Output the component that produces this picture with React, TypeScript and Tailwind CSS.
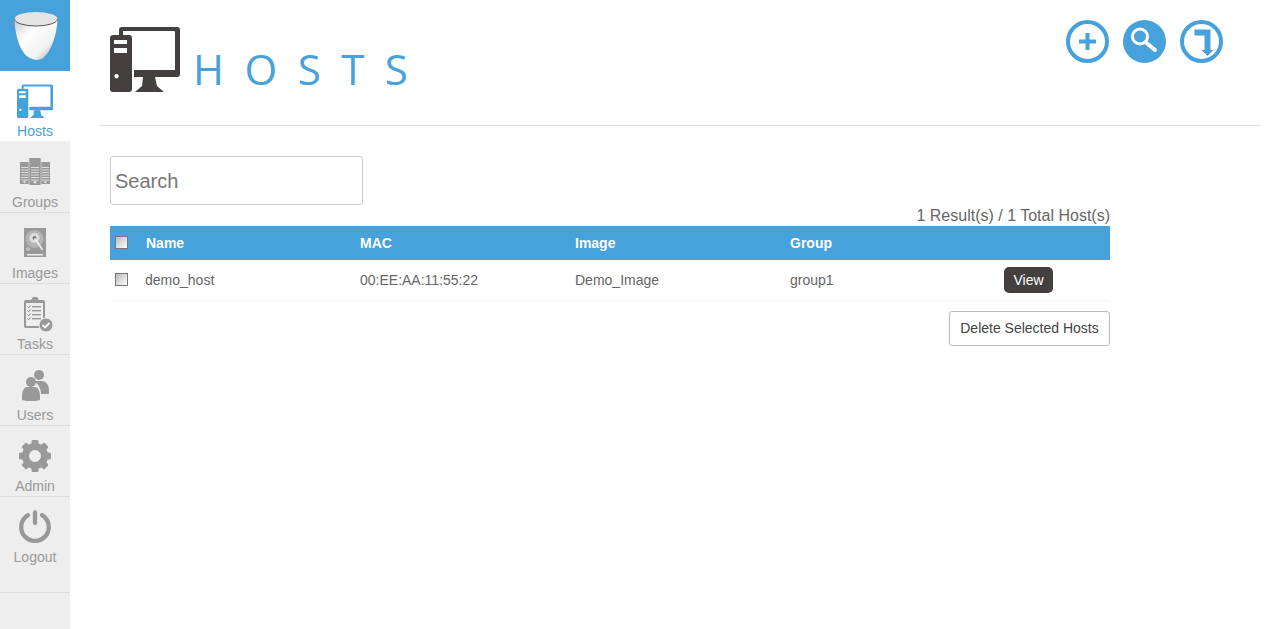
import type { ReactNode } from 'react';

const hosts = [{ name: 'demo_host', mac: '00:EE:AA:11:55:22', image: 'Demo_Image', group: 'group1' }];

function HostIcon({ className }: { className?: string }) {
  return (
    <svg viewBox="0 0 70 66" className={className} fill="currentColor">
      <path
        fillRule="evenodd"
        d="M12 1h55a3 3 0 0 1 3 3v44a3 3 0 0 1-3 3H24V44h41V6a1 1 0 0 0-1-1H13v4H9V4a3 3 0 0 1 3-3Z"
      />
      <path d="M33 51h12l2 9 7 6H25l7-6Z" />
      <path
        fillRule="evenodd"
        d="M3 9h16a3 3 0 0 1 3 3v51a3 3 0 0 1-3 3H3a3 3 0 0 1-3-3V12a3 3 0 0 1 3-3Zm1 5v4h13v-4Zm0 8v5h13v-5Zm2.500 26a2.200 2.200 0 1 0 .01 0Z"
      />
    </svg>
  );
}

function GroupsIcon() {
  const lines = (x: number, w: number) =>
    [11, 13.500, 16, 18.500, 21, 23.500].map((y) => <rect key={y} x={x} y={y + 2} width={w} height="1" fill="#ddd" />);
  return (
    <svg viewBox="0 0 36 36" className="size-9" fill="#999">
      <rect x="3" y="8" width="9" height="22" />
      <rect x="24" y="8" width="9" height="22" />
      <rect x="12" y="4" width="12" height="27" rx="1" />
      <path d="M12 4v27M24 4v27" stroke="#ddd" strokeWidth="0.700" />
      {lines(4, 7)}
      {lines(25, 7)}
      {lines(14, 8)}
      <circle cx="18" cy="28" r="1.500" fill="#ddd" />
      <circle cx="7.500" cy="28" r="1.200" fill="#ddd" />
      <circle cx="28.500" cy="28" r="1.200" fill="#ddd" />
    </svg>
  );
}

function ImagesIcon() {
  return (
    <svg viewBox="0 0 36 36" className="size-9">
      <rect x="7" y="3" width="22" height="29" fill="#999" />
      <rect x="10" y="29" width="16" height="1.500" fill="#eee" />
      <circle cx="17.500" cy="14" r="9" fill="#b5b5b5" />
      <circle cx="17.500" cy="13" r="5" fill="#dcdcdc" />
      <circle cx="17.500" cy="13" r="2" fill="#777" />
      <path d="M18 14l7 10" stroke="#eee" strokeWidth="1.800" strokeLinecap="round" />
      <circle cx="11" cy="24" r="1.300" fill="none" stroke="#eee" strokeWidth="0.700" />
    </svg>
  );
}

function TasksIcon() {
  return (
    <svg viewBox="0 0 36 36" className="size-9">
      <path d="M9 4h5l2-3h4l2 3h4a2 2 0 0 1 2 2v24a2 2 0 0 1-2 2H9a2 2 0 0 1-2-2V6a2 2 0 0 1 2-2Z" fill="#999" />
      <rect x="9" y="7" width="17" height="23" fill="#eee" />
      {[10, 14, 18, 22].map((y) => (
        <g key={y}>
          <path d={`M10.500 ${y + 0.500}l1.200 1.200 2-2.200`} fill="none" stroke="#777" strokeWidth="0.900" />
          <rect x="15" y={y} width="9" height="1.400" fill="#999" />
        </g>
      ))}
      <circle cx="29" cy="29" r="7" fill="#999" stroke="#eee" strokeWidth="1" />
      <path d="M25.500 29l2.500 2.500 4.500-4.500" fill="none" stroke="#fff" strokeWidth="1.800" />
    </svg>
  );
}

function UsersIcon() {
  return (
    <svg viewBox="0 0 36 36" className="size-9" fill="#999">
      <circle cx="22" cy="8" r="5" />
      <path d="M19 14h6c4 0 7 4 7 9v4h-8c0-5-2-9-5-11Z" />
      <circle cx="14" cy="15" r="5" />
      <path d="M10 20h8c3 0 5 4 5 9v4c-3 1-6 1-9 1s-6 0-9-1v-4c0-5 2-9 5-9Z" />
    </svg>
  );
}

function AdminIcon() {
  return (
    <svg viewBox="0 0 36 36" className="size-9" fill="#999">
      {[0, 45, 90, 135, 180, 225, 270, 315].map((a) => (
        <rect key={a} x="14.500" y="2" width="7" height="8" rx="1.500" transform={`rotate(${a} 18 18)`} />
      ))}
      <circle cx="18" cy="18" r="9.500" fill="none" stroke="#999" strokeWidth="7" />
    </svg>
  );
}

function LogoutIcon() {
  return (
    <svg viewBox="0 0 36 36" className="size-9" fill="none" stroke="#999" strokeLinecap="round" strokeWidth="4.300">
      <path d="M11 6.200a13.800 13.800 0 1 0 14 0" />
      <path d="M18 3.500v10.500" />
    </svg>
  );
}

function NavItem({ icon, label, active, className }: { icon: ReactNode; label: string; active?: boolean; className?: string }) {
  return (
    <div
      className={`flex flex-col items-center ${active ? 'bg-white text-[#47a1db]' : 'border-b border-[#ddd] text-[#999]'} ${className ?? 'h-[71px] pt-3'}`}
    >
      <div className="h-[38px]">{icon}</div>
      <span className="text-sm leading-5">{label}</span>
    </div>
  );
}

function Sidebar() {
  return (
    <div className="w-[70px] min-h-[629px] shrink-0 bg-[#eee]">
      <div className="flex h-[71px] items-center justify-center bg-[#47a1db]">
        <svg viewBox="0 0 44 50" className="ml-px h-[50px] w-[44px]">
          <defs>
            <linearGradient id="cup" x1="0" y1="0" x2="1" y2="1">
              <stop offset="0" stopColor="#c9c9c9" />
              <stop offset="0.350" stopColor="#fff" />
              <stop offset="0.700" stopColor="#f2f2f2" />
              <stop offset="1" stopColor="#9c9c9c" />
            </linearGradient>
          </defs>
          <path d="M0.500 8C1 26 7 43 16 47c5 2.500 9 2.500 13 0C37 41 43 24 43.500 8Z" fill="url(#cup)" />
          <ellipse cx="22" cy="8" rx="21.500" ry="7" fill="#e4e4e4" />
          <path d="M0.500 8a21.500 7 0 0 0 43 0" fill="none" stroke="#555" strokeWidth="1" />
        </svg>
      </div>
      <NavItem active label="Hosts" icon={<HostIcon className="mt-px h-[34px] w-9" />} className="h-[70px] pt-3" />
      <NavItem label="Groups" icon={<GroupsIcon />} className="h-[72px] pt-[13px]" />
      <NavItem label="Images" icon={<ImagesIcon />} />
      <NavItem label="Tasks" icon={<TasksIcon />} />
      <NavItem label="Users" icon={<UsersIcon />} />
      <NavItem label="Admin" icon={<AdminIcon />} />
      <NavItem label="Logout" icon={<LogoutIcon />} className="h-[96px] pt-3" />
    </div>
  );
}

function TopActions() {
  return (
    <div className="flex gap-3 pt-[19px] pr-[36px]">
      <svg viewBox="0 0 45 45" className="size-[45px]" fill="none" stroke="#47a1db">
        <circle cx="22.500" cy="22.500" r="19.500" strokeWidth="4" />
        <path d="M14 22.500h17M22.500 14v17" strokeWidth="4" />
      </svg>
      <svg viewBox="0 0 45 45" className="size-[45px]" fill="none">
        <circle cx="22.500" cy="22.500" r="21.500" fill="#47a1db" />
        <circle cx="18" cy="17.500" r="7.500" stroke="#fff" strokeWidth="3" />
        <path d="M24 23.500l9 7.500" stroke="#fff" strokeWidth="4" strokeLinecap="round" />
      </svg>
      <svg viewBox="0 0 45 45" className="size-[45px]" fill="none">
        <circle cx="22.500" cy="22.500" r="19.500" stroke="#47a1db" strokeWidth="4" />
        <path d="M15.500 10.500h16v20.500h3l-6 6-6-6h3V16.500h-10Z" fill="#47a1db" />
      </svg>
    </div>
  );
}

function Checkbox() {
  return (
    <input
      type="checkbox"
      className="-mt-px block size-[13px] appearance-none border border-[#777] bg-gradient-to-br from-[#bbb] to-[#fff]"
    />
  );
}

export default function App() {
  return (
    <div className="flex min-h-[629px] bg-white font-['Liberation_Sans',Arial,sans-serif] text-[#666]">
      <Sidebar />
      <div className="flex-1 pl-[30px] pr-5">
        <div className="flex h-[126px] justify-between border-b border-[#ddd]">
          <div className="flex items-start pl-[10px] pt-[26px]">
            <HostIcon className="h-[66px] w-[70px] text-[#444040]" />
            <h1 className="ml-[13px] mt-[13px] font-['Open_Sans',sans-serif] text-[42px] leading-[60px] tracking-[20.5px] text-[#47a1db]">
              HOSTS
            </h1>
          </div>
          <TopActions />
        </div>

        <div className="w-[1010px] pl-[10px]">
          <input
            placeholder="Search"
            className="mt-[30px] block h-[49px] w-[253px] rounded-[3px] border border-[#ccc] px-1 pt-0.5 text-xl text-[#666] placeholder:text-[#777] outline-none"
          />
          <div className="mt-px h-5 text-right text-base leading-[19px]">1 Result(s) / 1 Total Host(s)</div>

          <div className="grid h-[34px] grid-cols-[36px_214px_215px_215px_1fr] items-center bg-[#47a1db] text-sm font-bold text-white">
            <div className="pl-[5px]">
              <Checkbox />
            </div>
            <div>Name</div>
            <div>MAC</div>
            <div>Image</div>
            <div>Group</div>
          </div>

          {hosts.map((host) => (
            <div
              key={host.name}
              className="grid h-[41px] grid-cols-[35px_215px_215px_215px_1fr_163px] items-center border-b border-[#f3f3f3] text-sm"
            >
              <div className="pl-[5px]">
                <Checkbox />
              </div>
              <div>{host.name}</div>
              <div>{host.mac}</div>
              <div>{host.image}</div>
              <div>{host.group}</div>
              <div className="flex justify-center">
                <button className="h-[26px] w-[49px] rounded-[5px] bg-[#444040] text-sm text-white">View</button>
              </div>
            </div>
          ))}

          <div className="mt-[10px] flex justify-end">
            <button className="h-[35px] w-[161px] rounded-[3px] border border-[#bbb] bg-white pb-0.5 text-sm text-[#444]">
              Delete Selected Hosts
            </button>
          </div>
        </div>
      </div>
    </div>
  );
}
